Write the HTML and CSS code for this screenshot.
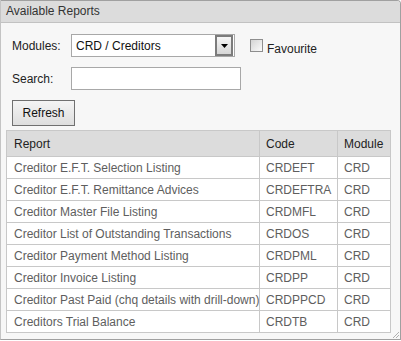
FILE: index.html
```html
<!DOCTYPE html>
<html>
<head>
<meta charset="utf-8">
<link rel="stylesheet" href="styles.css">
</head>
<body>
<div class="panel">
  <div class="panel-header">Available Reports</div>
  <div class="panel-body">
    <div class="form">
      <div class="row">
        <span class="label">Modules:</span>
        <div class="select">
          <span class="select-text">CRD / Creditors</span>
          <span class="select-arrow"><svg width="7" height="4" viewBox="0 0 7 4"><path d="M0 0H7L3.5 4Z" fill="#000"/></svg></span>
        </div>
        <span class="checkbox"></span>
        <span class="check-label">Favourite</span>
      </div>
      <div class="row">
        <span class="label">Search:</span>
        <div class="input"></div>
      </div>
      <div class="button-row">
        <div class="button">Refresh</div>
      </div>
    </div>
    <table class="grid">
      <colgroup>
        <col class="c-report">
        <col class="c-code">
        <col class="c-module">
      </colgroup>
      <thead>
        <tr><th class="first">Report</th><th>Code</th><th>Module</th></tr>
      </thead>
      <tbody>
        <tr><td class="first">Creditor E.F.T. Selection Listing</td><td>CRDEFT</td><td>CRD</td></tr>
        <tr><td class="first">Creditor E.F.T. Remittance Advices</td><td>CRDEFTRA</td><td>CRD</td></tr>
        <tr><td class="first">Creditor Master File Listing</td><td>CRDMFL</td><td>CRD</td></tr>
        <tr><td class="first">Creditor List of Outstanding Transactions</td><td>CRDOS</td><td>CRD</td></tr>
        <tr><td class="first">Creditor Payment Method Listing</td><td>CRDPML</td><td>CRD</td></tr>
        <tr><td class="first">Creditor Invoice Listing</td><td>CRDPP</td><td>CRD</td></tr>
        <tr><td class="first">Creditor Past Paid (chq details with drill-down)</td><td>CRDPPCD</td><td>CRD</td></tr>
        <tr><td class="first">Creditors Trial Balance</td><td>CRDTB</td><td>CRD</td></tr>
      </tbody>
    </table>
  </div>
  <svg class="grip" width="8" height="8" viewBox="0 0 8 8">
    <path d="M7 1L1 7M7 4L4 7" stroke="#b0b0b0" stroke-width="1"/>
  </svg>
</div>
</body>
</html>
```

FILE: styles.css
```css
html, body {
  margin: 0;
  padding: 0;
  background: #ffffff;
}
body {
  font-family: "Liberation Sans", Arial, sans-serif;
  font-size: 12px;
  color: #222;
}
.panel {
  position: relative;
  width: 401px;
  height: 340px;
  box-sizing: border-box;
  border: 1px solid #a0a0a0;
  border-left-color: #c4c4c4;
  border-radius: 0 4px 0 0;
  background: #f7f7f7;
  overflow: hidden;
}
.panel-header {
  height: 21px;
  line-height: 21px;
  padding-left: 5px;
  background: #dcdcdc;
  border-bottom: 1px solid #c2c2c2;
  color: #333;
}
.panel-body {
  padding: 11px 0 0 5px;
}
.form {
  padding-left: 6px;
}
.row {
  display: flex;
  align-items: center;
  height: 23px;
  margin-bottom: 10px;
}
.label {
  width: 59px;
  color: #222;
}
.select {
  width: 164px;
  height: 23px;
  box-sizing: border-box;
  border: 1px solid #a8a8a8;
  background: #fff;
  display: flex;
  align-items: center;
  justify-content: space-between;
  padding: 1px;
}
.select-text {
  padding-left: 3px;
  color: #111;
}
.select-arrow {
  width: 18px;
  height: 21px;
  box-sizing: border-box;
  border: 2px solid #7c7c7c;
  background: linear-gradient(#f6f6f6, #d6d6d6);
  display: flex;
  align-items: center;
  justify-content: center;
}
.checkbox {
  width: 13px;
  height: 13px;
  box-sizing: border-box;
  margin-left: 15px;
  border: 1px solid #8e8e8e;
  background: linear-gradient(135deg, #d4d4d4, #fbfbfb);
}
.check-label {
  margin-left: 4px;
  margin-top: 6px;
  color: #222;
}
.input {
  width: 170px;
  height: 23px;
  box-sizing: border-box;
  border: 1px solid #a8a8a8;
  background: #fff;
}
.button-row {
  display: flex;
  height: 30px;
}
.button {
  width: 63px;
  height: 26px;
  box-sizing: border-box;
  border: 1px solid #707070;
  background: linear-gradient(#f4f4f4, #dedede);
  display: flex;
  align-items: center;
  justify-content: center;
  color: #111;
}
.grid {
  border-collapse: collapse;
  table-layout: fixed;
  width: 384px;
  background: #fff;
}
.c-report { width: 253px; }
.c-code { width: 78px; }
.c-module { width: 53px; }
.grid th, .grid td {
  border: 1px solid #c8c8c8;
  padding: 0 6px;
  text-align: left;
  white-space: nowrap;
  overflow: hidden;
}
.grid th {
  height: 25px;
  background: #dcdcdc;
  font-weight: normal;
  color: #222;
}
.grid td {
  height: 21px;
  color: #5e5e5e;
}
.grid .first {
  padding-left: 7px;
  padding-right: 0;
}
.grip {
  position: absolute;
  right: 0;
  bottom: 0;
}
```
